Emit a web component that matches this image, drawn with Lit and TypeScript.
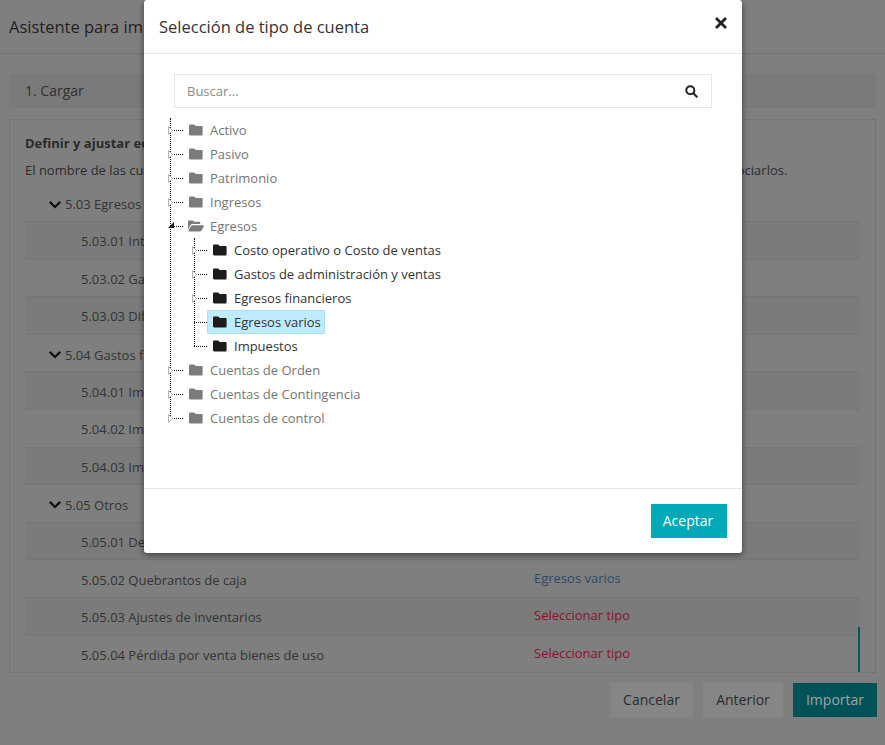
import { LitElement, html, css } from "lit";
import { customElement } from "lit/decorators.js";

const folder = (cls: string) => html`<svg class="folder ${cls}" viewBox="0 0 14 12" aria-hidden="true"><path d="M1.3 0.5h3.6c.5 0 .8.2 1 .5l.7 1h6c.6 0 1 .4 1 1v7.2c0 .7-.5 1.3-1.2 1.3H1.3C.6 11.5 0 11 0 10.3V1.8C0 1 .6.5 1.3.5z"/></svg>`;
const folderOpen = html`<svg class="folder dim" viewBox="0 0 16 12" aria-hidden="true"><path d="M0 9.6V1.6C0 .9.6.4 1.2.4h3.2c.5 0 .8.2 1 .5l.6 .9h5c.7 0 1.2.5 1.2 1.2v.9H4.4c-.8 0-1.5.4-1.9 1.1L0 9.6z"/><path d="M4.3 5.2H15c.7 0 1.1.7.8 1.3l-2.5 4.3c-.3.4-.7.7-1.2.7H1.2c-.7 0-1.1-.7-.8-1.3l2.7-4.3c.3-.4.7-.7 1.2-.7z"/></svg>`;
const chevron = html`<svg class="chev" viewBox="0 0 12 9" aria-hidden="true"><path d="M1.6 1.1 6 5.4l4.4-4.3L12 2.7 6 8.6 0 2.7z"/></svg>`;

interface Row { label: string; tipo?: string; kind?: "ok" | "no"; }
interface Group { label: string; rows: Row[]; }

const groups: Group[] = [
  { label: "5.03 Egresos varios", rows: [
    { label: "5.03.01 Intereses pagados" }, { label: "5.03.02 Gastos bancarios" }, { label: "5.03.03 Diferencia en cambio" } ] },
  { label: "5.04 Gastos financieros", rows: [
    { label: "5.04.01 Impuesto a la renta" }, { label: "5.04.02 Impuesto al valor" }, { label: "5.04.03 Impuestos varios" } ] },
  { label: "5.05 Otros", rows: [
    { label: "5.05.01 Depreciaciones" },
    { label: "5.05.02 Quebrantos de caja", tipo: "Egresos varios", kind: "ok" },
    { label: "5.05.03 Ajustes de inventarios", tipo: "Seleccionar tipo", kind: "no" },
    { label: "5.05.04 Pérdida por venta bienes de uso", tipo: "Seleccionar tipo", kind: "no" } ] },
];

@customElement("app-root")
export class AppRoot extends LitElement {
  static styles = css`
    :host {
      display: block; position: relative; width: 885px; height: 745px; overflow: hidden;
      background: #7f7f7f; color: #333; font-family: "Open Sans", sans-serif; font-size: 13px;
    }
    * { box-sizing: border-box; }
    .page { height: 745px; display: flex; flex-direction: column; color: #2b2b2b; }
    .page-head { height: 54px; flex: none; border-bottom: 1px solid #747474; padding-left: 9px; display: flex; align-items: center; font-size: 16.5px; padding-bottom: 1px; color: #1f1f1f; }
    .tab { margin: 20px 9px 0; height: 34px; flex: none; background: #7a7a7a; display: flex; align-items: center; padding: 0 0 2px 16px; color: #2f2f2f; font-size: 14px; }
    .panel { margin: 11px 9px 0; height: 554px; flex: none; border: 1px solid #737373; padding: 14px 15px 0; display: flex; flex-direction: column; position: relative; }
    .panel h3 { margin: 0; font-size: 13px; font-weight: 700; line-height: 18px; color: #2b2b2b; }
    .panel p { margin: 9px 0 0; line-height: 18px; white-space: nowrap; color: #2b2b2b; height: 18px; }
    .list { margin-top: 4.4px; display: flex; flex-direction: column; }
    .ghead { height: 37.6px; flex: none; display: flex; align-items: center; padding: 3px 0 0 24px; gap: 4px; color: #333; border-top: 1px solid #767676; }
    .ghead:first-child { border-top-color: transparent; }
    .chev { width: 12px; height: 9px; fill: #111; flex: none; }
    .row { height: 37.6px; flex: none; display: grid; grid-template-columns: 453px 1fr; align-items: center; padding: 2px 0 0 56px; border-top: 1px solid #767676; color: #333; }
    .row.odd { background: #7b7b7b; }
    .ok { color: #2a4a66; padding-bottom: 4px; }
    .no { color: #85142a; padding-bottom: 4px; }
    .thumb { position: absolute; right: 15px; bottom: 0; width: 2px; height: 45px; background: #00595f; }
    .actions { display: flex; justify-content: flex-end; gap: 10px; padding: 10px 8px 0 0; }
    .btn { height: 34px; display: flex; align-items: center; justify-content: center; font-size: 14px; padding-bottom: 2px; }
    .btn.grey { background: #868686; color: #2b2b2b; }
    .b1 { width: 83px; } .b2 { width: 80px; }
    .b3 { width: 84px; background: #005259; color: #a3a3a3; }

    .modal { position: absolute; left: 144px; top: 0; width: 598px; height: 553px; background: #fff; border-radius: 3px; box-shadow: 0 2px 6px rgba(0,0,0,.5); display: flex; flex-direction: column; }
    .m-head { height: 54px; flex: none; border-bottom: 1px solid #e5e5e5; display: flex; align-items: center; justify-content: space-between; padding: 0 14px 1px 15px; font-size: 16.5px; color: #333; }
    .close { width: 14px; height: 14px; fill: #222; margin-top: -7px; }
    .m-body { flex: 1; padding: 20px 30px 0; }
    .search { height: 34px; border: 1px solid #e5e5e5; display: flex; align-items: center; justify-content: space-between; padding: 0 13px 0 12px; color: #8b8b8b; }
    .search svg { width: 13px; height: 13px; fill: none; stroke: #222; stroke-width: 2; }
    .tree { margin: 10px 0 0 -6px; position: relative; }
    .node { height: 24px; display: flex; align-items: center; position: relative; white-space: nowrap; }
    .top { color: #757575; }
    .sub { color: #333; }
    .gutter { width: 21px; height: 24px; flex: none; position: relative; }
    .gutter::before { content: ""; position: absolute; left: 4px; right: 6px; top: 12px; border-top: 1px dotted #111; }
    .tri { position: absolute; left: 0; top: 8px; width: 5px; height: 9px; }
    .tri path { fill: #fff; stroke: #b4b4b4; stroke-width: 1; }
    .tri-open { position: absolute; left: 0; top: 8px; width: 6px; height: 6px; fill: #222; }
    .vline { position: absolute; width: 0; border-left: 1px dotted #111; }
    .v-top { left: 2px; top: 0; height: 300px; }
    .v-sub { left: 26px; top: 120px; height: 108px; }
    .folder { height: 12px; width: 14px; flex: none; margin: 0 7px 0 0; }
    .folder.dim { fill: #7b7b7b; width: 16px; margin-right: 6px; margin-left: -1px; }
    .folder.dark { fill: #1c1c1c; }
    .folder.grey { fill: #7b7b7b; }
    .children { padding-left: 24px; }
    .label-sel { position: absolute; left: 15px; top: 0; width: 118px; height: 24px; background: #beebff; border: 1px solid #a9dff6; border-radius: 1px; }
    .plain-g { width: 21px; height: 24px; flex: none; position: relative; }
    .plain-g::before { content: ""; position: absolute; left: 2px; right: 6px; top: 12px; border-top: 1px dotted #111; }
    .node > .folder, .node > span { position: relative; }
    .m-foot { height: 65px; flex: none; border-top: 1px solid #e5e5e5; display: flex; justify-content: flex-end; align-items: center; padding: 0 15px 1px 0; }
    .accept { width: 76px; height: 34px; background: #00a9b7; color: #fff; display: flex; align-items: center; justify-content: center; font-size: 14px; padding-right: 2px; }
  `;

  private topNode(label: string) {
    return html`<div class="node top"><div class="gutter"><svg class="tri" viewBox="0 0 5 9"><path d="M.5.5 4.5 4.5.5 8.5z"/></svg></div>${folder("grey")}<span>${label}</span></div>`;
  }
  private subNode(label: string, arrow: boolean, selected = false) {
    return html`<div class="node sub">
      ${selected ? html`<div class="label-sel"></div>` : ""}
      <div class=${arrow ? "gutter" : "plain-g"}>${arrow ? html`<svg class="tri" viewBox="0 0 5 9"><path d="M.5.5 4.5 4.5.5 8.5z"/></svg>` : ""}</div>
      ${folder("dark")}<span>${label}</span></div>`;
  }

  render() {
    return html`
      <div class="page">
        <div class="page-head">Asistente para importar cuentas</div>
        <div class="tab">1. Cargar</div>
        <div class="panel">
          <h3>Definir y ajustar equivalencias</h3>
          <p>El nombre de las cuentas del archivo no coincide con ninguno de los tipos de cuenta disponibles, favor revisar para asociarlos.</p>
          <div class="list">
            ${groups.map((g) => html`
              <div class="ghead">${chevron}<span>${g.label}</span></div>
              ${g.rows.map((r, idx) => html`
                <div class="row ${idx % 2 === 0 ? "odd" : ""}">
                  <span>${r.label}</span>
                  ${r.tipo ? html`<span class=${r.kind ?? ""}>${r.tipo}</span>` : html`<span></span>`}
                </div>`)}
            `)}
          </div>
          <div class="thumb"></div>
        </div>
        <div class="actions">
          <div class="btn grey b1">Cancelar</div>
          <div class="btn grey b2">Anterior</div>
          <div class="btn b3">Importar</div>
        </div>
      </div>

      <div class="modal">
        <div class="m-head">
          <span>Selección de tipo de cuenta</span>
          <svg class="close" viewBox="0 0 14 14" aria-hidden="true"><path d="M3 1 7 5l4-4 2 2-4 4 4 4-2 2-4-4-4 4-2-2 4-4-4-4z"/></svg>
        </div>
        <div class="m-body">
          <div class="search">
            <span>Buscar...</span>
            <svg viewBox="0 0 13 13" aria-hidden="true"><circle cx="5.3" cy="5.3" r="4"/><path d="m8.3 8.3 4 4"/></svg>
          </div>
          <div class="tree">
            <div class="vline v-top"></div>
            <div class="vline v-sub"></div>
            ${["Activo", "Pasivo", "Patrimonio", "Ingresos"].map((l) => this.topNode(l))}
            <div class="node top"><div class="gutter"><svg class="tri-open" viewBox="0 0 6 6"><path d="M6 0v6H0z"/></svg></div>${folderOpen}<span>Egresos</span></div>
            <div class="children">
              ${this.subNode("Costo operativo o Costo de ventas", true)}
              ${this.subNode("Gastos de administración y ventas", true)}
              ${this.subNode("Egresos financieros", true)}
              ${this.subNode("Egresos varios", false, true)}
              ${this.subNode("Impuestos", false)}
            </div>
            ${["Cuentas de Orden", "Cuentas de Contingencia", "Cuentas de control"].map((l) => this.topNode(l))}
          </div>
        </div>
        <div class="m-foot"><div class="accept">Aceptar</div></div>
      </div>
    `;
  }
}
